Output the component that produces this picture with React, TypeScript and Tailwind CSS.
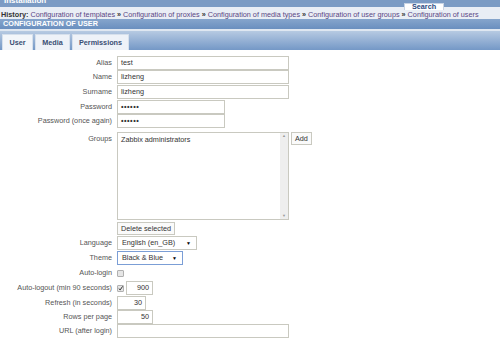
import React from 'react';

const FONT = { fontFamily: '"Liberation Sans", Arial, sans-serif' };

const CRUMBS = [
  'Configuration of templates',
  'Configuration of proxies',
  'Configuration of media types',
  'Configuration of user groups',
  'Configuration of users',
];

function Row({ label, children, h }: { label: string; children?: React.ReactNode; h: string }) {
  return (
    <div className={`flex items-start ${h}`}>
      <div className="w-[117px] h-[14px] pr-[5px] flex items-center justify-end text-[#555]">{label}</div>
      <div className="h-[14px] flex items-center gap-[2px]">{children}</div>
    </div>
  );
}

function Input({ w, value, right, pw }: { w: string; value?: string; right?: boolean; pw?: boolean }) {
  return (
    <div
      className={`${w} h-[14px] border border-[#c9c9c0] bg-white px-[3px] flex items-center text-[#333] ${right ? 'justify-end' : ''} ${pw ? 'font-bold tracking-[0.5px]' : ''}`}
    >
      {value}
    </div>
  );
}

function Select({ w, value, focus }: { w: string; value: string; focus?: boolean }) {
  return (
    <div
      className={`${w} h-[14px] border ${focus ? 'border-[#7b9ed6]' : 'border-[#c9c9c0]'} bg-white pl-[4px] pr-[5px] flex items-center justify-between text-[#333]`}
    >
      <span>{value}</span>
      <span className="text-[5px] text-black">▼</span>
    </div>
  );
}

function Btn({ children }: { children: React.ReactNode }) {
  return (
    <div className="h-[13px] px-[3px] border border-[#c9c9c0] bg-[#fafafa] flex items-center text-[#333]">{children}</div>
  );
}

function Check({ checked }: { checked?: boolean }) {
  return (
    <div className="w-[7px] h-[7px] border border-[#b0b0b0] bg-[#e6e6e6] rounded-[1px] flex items-center justify-center">
      {checked && (
        <svg width="7" height="7" viewBox="0 0 7 7">
          <path d="M1 3.5 L3 5.5 L6.5 0.5" stroke="#333" strokeWidth="1.4" fill="none" />
        </svg>
      )}
    </div>
  );
}

export default function App() {
  return (
    <div className="relative w-[500px] h-[341px] overflow-hidden bg-white text-[7.25px] leading-none" style={FONT}>
      {/* top bar */}
      <div className="h-[7px] bg-[#7b9bc4] overflow-hidden">
        <div className="-mt-[3px] pl-[4px] text-white font-bold text-[8px] leading-[8px]">Installation</div>
      </div>

      {/* history */}
      <div className="h-[12px] bg-[#e9eef5] flex items-center whitespace-nowrap pl-[1px] pt-[3px]">
        <span className="font-bold text-[#333] mr-[2px]">History:</span>
        {CRUMBS.map((c, i) => (
          <span key={c} className="flex items-center">
            {i > 0 && <span className="mx-[2px] text-[#333] font-bold">»</span>}
            <span className="text-[#5a4784]">{c}</span>
          </span>
        ))}
      </div>

      {/* search tab overlay */}
      <div className="absolute left-[404px] top-[3px] w-[40px] h-[7px] bg-white border border-b-0 border-[#c8d4e4] flex items-center justify-center font-bold text-[#2a4a80] leading-[6px]">
        Search
      </div>

      {/* page header */}
      <div className="h-[10px] bg-gradient-to-b from-[#86a5cc] to-[#6a8fbf] flex items-center pl-[3px] text-white font-bold">
        CONFIGURATION OF USER
      </div>

      {/* tabs */}
      <div className="h-[2px] bg-[#dfe7f1]" />
      <div className="h-[19px] bg-gradient-to-b from-[#b7cae2] to-[#7498c6] flex items-end pl-[2px] gap-[2px]">
        <div className="h-[16px] w-[31px] bg-[#f3f6fa] border border-b-0 border-[#d6e0ec] flex items-center justify-center font-bold text-[#3a4f73]">User</div>
        <div className="h-[16px] w-[35px] bg-[#eef2f8] border border-b-0 border-[#d6e0ec] flex items-center justify-center font-bold text-[#3a4f73]">Media</div>
        <div className="h-[16px] w-[57px] bg-[#eef2f8] border border-b-0 border-[#d6e0ec] flex items-center justify-center font-bold text-[#3a4f73]">Permissions</div>
      </div>

      {/* form */}
      <div className="flex flex-col pt-[6px]">
        <Row label="Alias" h="h-[14px]"><Input w="w-[172px]" value="test" /></Row>
        <Row label="Name" h="h-[15px]"><Input w="w-[172px]" value="lizheng" /></Row>
        <Row label="Surname" h="h-[15px]"><Input w="w-[172px]" value="lizheng" /></Row>
        <Row label="Password" h="h-[14px]"><Input w="w-[108px]" value="••••••" pw /></Row>
        <Row label="Password (once again)" h="h-[15px]"><Input w="w-[108px]" value="••••••" pw /></Row>

        <div className="flex items-start mt-[3px]">
          <div className="w-[117px] pr-[5px] pt-[3px] text-right text-[#555]">Groups</div>
          <div className="flex flex-col gap-[2px]">
            <div className="flex items-start gap-[2px]">
              <div className="w-[172px] h-[88px] border border-[#c9c9c0] bg-white flex">
                <div className="flex-1 pl-[3px] pt-[3px] text-[#333]">Zabbix administrators</div>
                <div className="w-[8px] bg-[#eeeeee] flex flex-col justify-between items-center py-[1px] text-[4px] text-[#999]">
                  <span>▲</span>
                  <span>▼</span>
                </div>
              </div>
              <Btn>Add</Btn>
            </div>
            <div className="flex"><Btn>Delete selected</Btn></div>
          </div>
        </div>

        <div className="h-[1px]" />
        <Row label="Language" h="h-[15px]"><Select w="w-[80px]" value="English (en_GB)" /></Row>
        <Row label="Theme" h="h-[15px]"><Select w="w-[66px]" value="Black & Blue" focus /></Row>
        <Row label="Auto-login" h="h-[15px]"><Check /></Row>
        <Row label="Auto-logout (min 90 seconds)" h="h-[15px]"><Check checked /><Input w="w-[27px]" value="900" right /></Row>
        <Row label="Refresh (in seconds)" h="h-[14px]"><Input w="w-[29px]" value="30" right /></Row>
        <Row label="Rows per page" h="h-[14px]"><Input w="w-[36px]" value="50" right /></Row>
        <Row label="URL (after login)" h="h-[15px]"><Input w="w-[172px]" /></Row>
      </div>
    </div>
  );
}
